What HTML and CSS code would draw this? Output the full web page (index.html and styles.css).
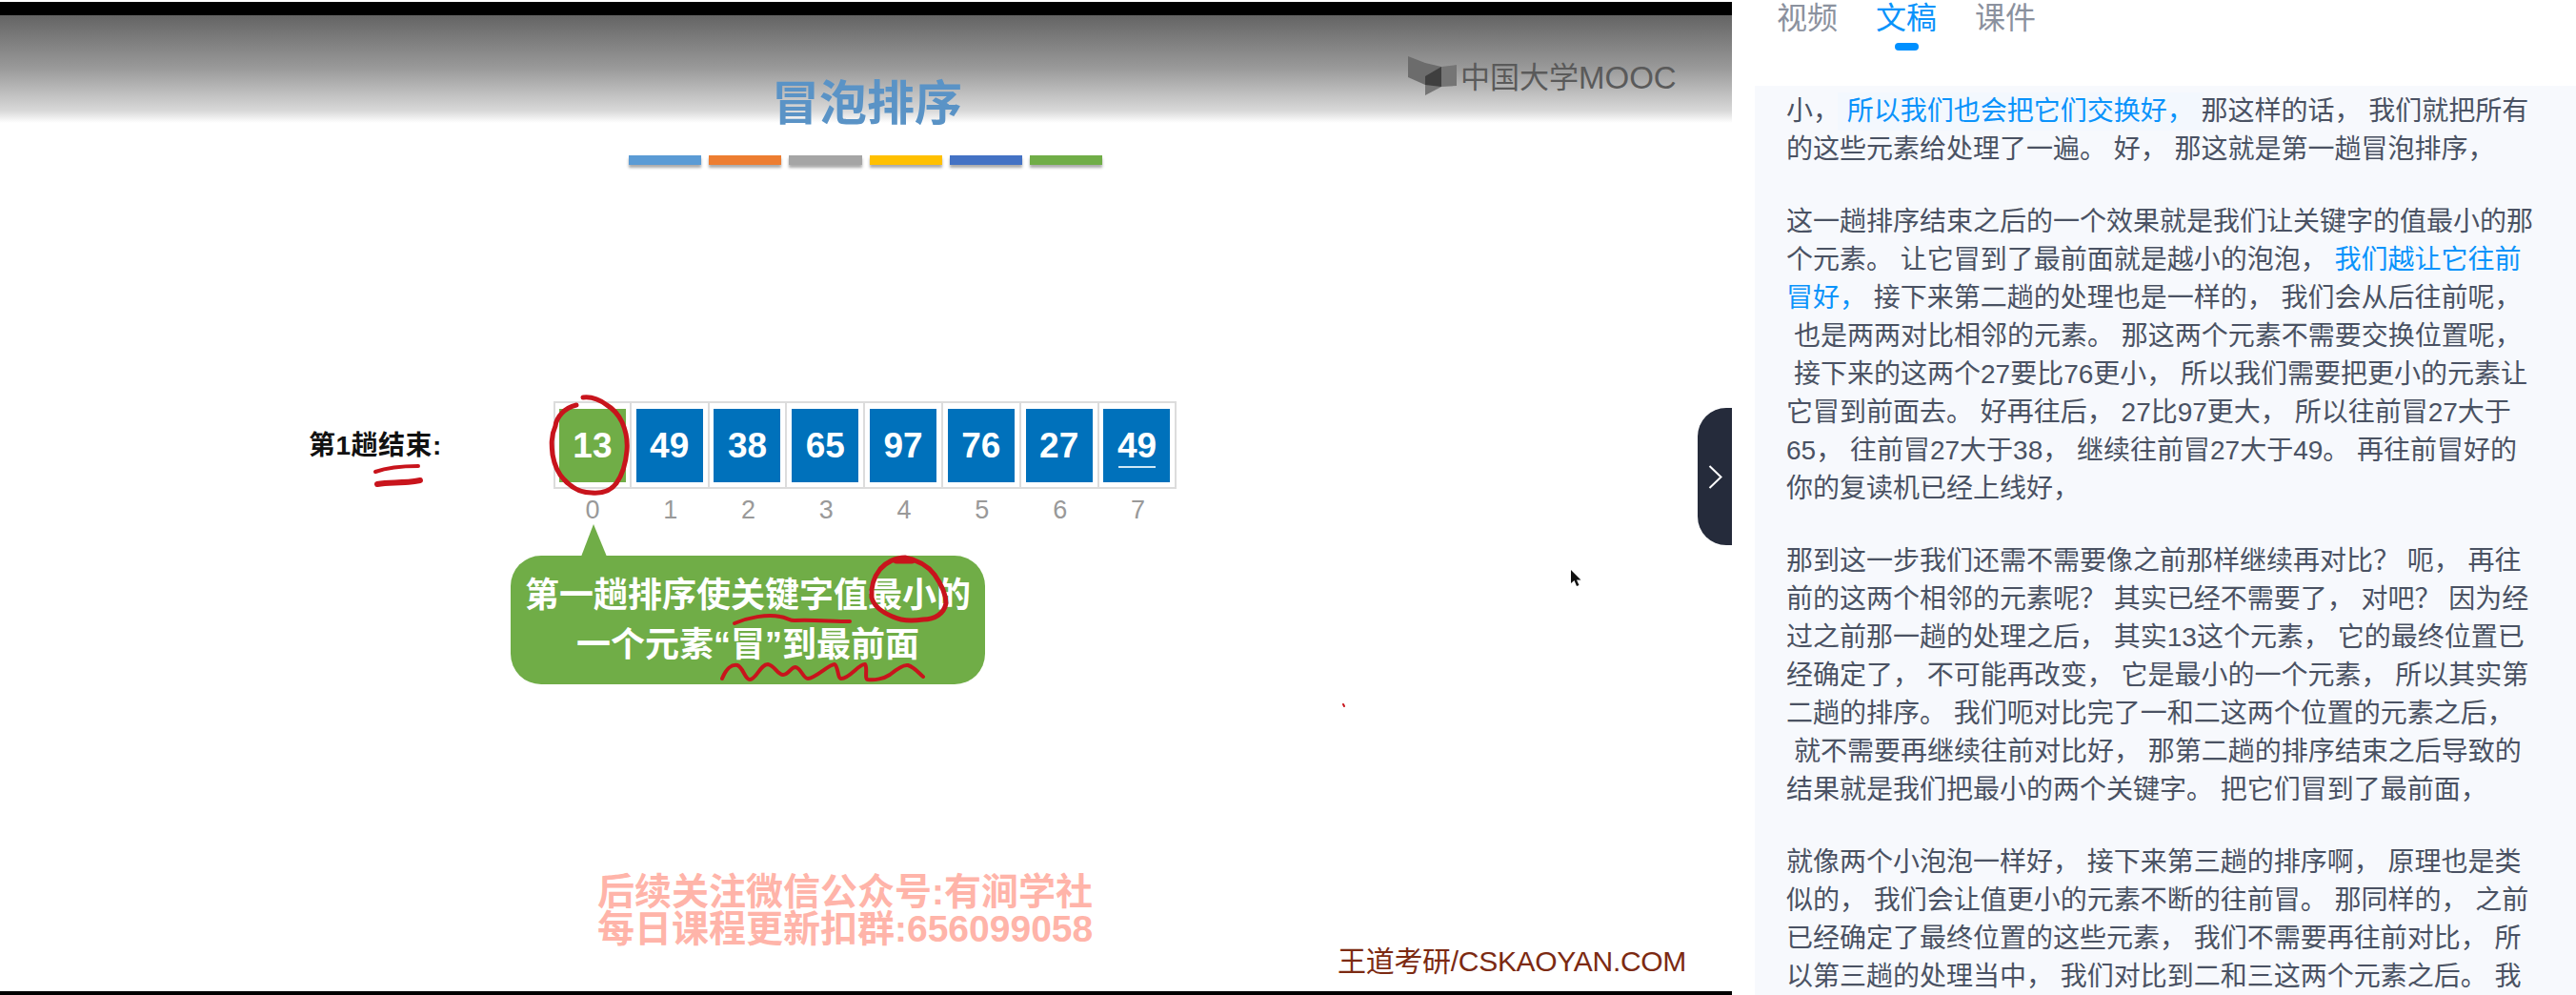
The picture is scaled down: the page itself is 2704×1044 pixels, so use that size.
FILE: index.html
```html
<!DOCTYPE html>
<html lang="zh-CN">
<head>
    <meta charset="UTF-8">
    <title>冒泡排序</title>
    <link rel="stylesheet" href="styles.css">
</head>
<body>
    <div id="page">
        <div id="video">
            <div class="band"></div>
            <div class="slide">
                <h1 class="title">冒泡排序</h1>
                <div class="bars">
                    <i class="c1"></i><i class="c2"></i><i class="c3"></i><i class="c4"></i><i class="c5"></i><i class="c6"></i>
                </div>

                <div class="logo">
                    <svg width="52" height="42" viewBox="0 0 52 42">
                        <polygon points="0,0 18,7 35,11 35,32 18,30 0,22" fill="#6c6c6c"/>
                        <polygon points="51,9 51,31 35,32 18,41 18,21 35,11" fill="#757575"/>
                        <polygon points="18,21 35,11 35,32 18,30" fill="#3f3f3f"/>
                    </svg>
                    <span class="cn">中国大学</span><span class="en">MOOC</span>
                </div>

                <div class="pass-label">第1趟结束:</div>
                <div class="cells">
                    <div class="cell"><b class="green">13</b><span>0</span></div>
                    <div class="cell"><b>49</b><span>1</span></div>
                    <div class="cell"><b>38</b><span>2</span></div>
                    <div class="cell"><b>65</b><span>3</span></div>
                    <div class="cell"><b>97</b><span>4</span></div>
                    <div class="cell"><b>76</b><span>5</span></div>
                    <div class="cell"><b>27</b><span>6</span></div>
                    <div class="cell"><b class="dup">49</b><span>7</span></div>
                </div>

                <div class="callout">第一趟排序使关键字值最小的<br>一个元素“冒”到最前面</div>

                <div class="notice">
                    <p>后续关注微信公众号:有涧学社</p>
                    <p>每日课程更新扣群:656099058</p>
                </div>
                <div class="site">王道考研/CSKAOYAN.COM</div>

                <!-- teacher's pen marks + mouse pointer -->
                <svg class="ink" width="1818" height="1044" viewBox="0 0 1818 1044">
                    <g fill="none" stroke="#c8141c" stroke-linecap="round" stroke-linejoin="round">
                        <path stroke-width="5" d="M605 425C592 428 584 438 583 447C578 458 579 468 580 477C582 488 586 497 592 503C600 512 610 517 621 517C633 518 642 514 647 507C654 497 657 485 658 473C659 462 657 452 653 443C649 435 644 429 637 425C629 419 620 416 612 417"/>
                        <path stroke-width="4" d="M394 495C408 490 425 489 439 489"/>
                        <path stroke-width="6" d="M396 508C410 505 420 508 441 504"/>
                        <path stroke-width="5" d="M924 597C930 590 940 585 950 585C965 588 975 595 981 603C988 613 993 623 993 633C991 644 981 650 969 650C955 652 945 651 937 647C925 642 917 635 915 627C914 616 916 607 924 597"/>
                        <path stroke-width="7" d="M941 588L957 588"/>
                        <path stroke-width="4" d="M771 654C785 648 805 644 819 647C826 648 830 652 835 651C850 650 875 652 892 652"/>
                        <path stroke-width="4" d="M758 712C762 702 768 697 774 698C780 700 782 713 787 713C794 713 798 697 806 697C813 698 816 708 822 708C828 708 830 700 835 700C841 701 843 712 848 712C856 712 870 697 876 697C880 699 879 712 883 712C892 712 902 696 908 697C911 700 907 713 911 713C918 714 928 712 934 708C940 703 948 697 953 698C960 700 964 706 969 710"/>
                        <path stroke-width="2" d="M1410 739L1411 741"/>
                    </g>
                    <path d="M1649 598V612L1652.500 609L1655 615L1657.500 614L1655 608.500H1659.500Z" fill="#111"/>
                </svg>
            </div>
            <div class="band"></div>
        </div>

        <button class="collapse">
            <svg width="15" height="25" viewBox="0 0 15 25"><path d="M1.500 1L13.500 12.500L1.500 24" fill="none" stroke="#fff" stroke-width="2"/></svg>
        </button>

        <div id="side">
            <div class="tabs">
                <a>视频</a>
                <a class="on">文稿</a>
                <a>课件</a>
            </div>
            <div class="doc">
                <p>
                    <span class="ln">小， <em class="hl">所以我们也会把它们交换好，</em> 那这样的话， 我们就把所有</span>
                    <span class="ln">的这些元素给处理了一遍。 好， 那这就是第一趟冒泡排序，</span>
                </p>
                <p>
                    <span class="ln">这一趟排序结束之后的一个效果就是我们让关键字的值最小的那</span>
                    <span class="ln">个元素。 让它冒到了最前面就是越小的泡泡， <em>我们越让它往前</em></span>
                    <span class="ln"><em>冒好，</em> 接下来第二趟的处理也是一样的， 我们会从后往前呢，</span>
                    <span class="ln in">也是两两对比相邻的元素。 那这两个元素不需要交换位置呢，</span>
                    <span class="ln in">接下来的这两个27要比76更小， 所以我们需要把更小的元素让</span>
                    <span class="ln">它冒到前面去。 好再往后， 27比97更大， 所以往前冒27大于</span>
                    <span class="ln">65， 往前冒27大于38， 继续往前冒27大于49。 再往前冒好的</span>
                    <span class="ln">你的复读机已经上线好，</span>
                </p>
                <p>
                    <span class="ln">那到这一步我们还需不需要像之前那样继续再对比？ 呃， 再往</span>
                    <span class="ln">前的这两个相邻的元素呢？ 其实已经不需要了， 对吧？ 因为经</span>
                    <span class="ln">过之前那一趟的处理之后， 其实13这个元素， 它的最终位置已</span>
                    <span class="ln">经确定了， 不可能再改变， 它是最小的一个元素， 所以其实第</span>
                    <span class="ln">二趟的排序。 我们呃对比完了一和二这两个位置的元素之后，</span>
                    <span class="ln in">就不需要再继续往前对比好， 那第二趟的排序结束之后导致的</span>
                    <span class="ln">结果就是我们把最小的两个关键字。 把它们冒到了最前面，</span>
                </p>
                <p>
                    <span class="ln">就像两个小泡泡一样好， 接下来第三趟的排序啊， 原理也是类</span>
                    <span class="ln">似的， 我们会让值更小的元素不断的往前冒。 那同样的， 之前</span>
                    <span class="ln">已经确定了最终位置的这些元素， 我们不需要再往前对比， 所</span>
                    <span class="ln">以第三趟的处理当中， 我们对比到二和三这两个元素之后。 我</span>
                </p>
            </div>
        </div>
    </div>
</body>
</html>
```

FILE: styles.css
```css
* {
    padding: 0px;
    margin: 0px;
    box-sizing: border-box;
}
body {
    background-color: #fff;
    font-family: "Liberation Sans", "Noto Sans CJK SC", sans-serif;
    overflow: hidden;
}
#page {
    width: 2704px;
    height: 1044px;
    display: flex;
    overflow: hidden;
}

/* left: the video frame */
#video {
    width: 1818px;
    height: 1044px;
    flex-shrink: 0;
    display: flex;
    flex-direction: column;
    padding-top: 2px;
}
.band {
    height: 14px;
    background-color: #000;
    flex-shrink: 0;
}
.band:last-child {
    height: 4px;
}
.slide {
    flex: 1;
    position: relative;
    background: linear-gradient(#646464 0px, #9a9a9a 56px, #d8d8d8 100px, #fff 113px);
    overflow: hidden;
}
/* positions below are measured from the slide top, which sits at y=16 */
.title {
    position: absolute;
    left: 810px;
    top: 60px;
    font-size: 50px;
    line-height: 66px;
    font-weight: bold;
    color: #5a93c6;
}
.bars {
    position: absolute;
    left: 660px;
    top: 147px;
    width: 497px;
    display: flex;
    gap: 8px;
}
.bars i {
    flex: 1;
    height: 10px;
    box-shadow: 0px 3px 3px #aaa;
}
.c1 { background-color: #5b9bd5; }
.c2 { background-color: #ed7d31; }
.c3 { background-color: #a5a5a5; }
.c4 { background-color: #ffc000; }
.c5 { background-color: #4472c4; }
.c6 { background-color: #70ad47; }

.logo {
    position: absolute;
    left: 1478px;
    top: 43px;
    display: flex;
    align-items: flex-start;
    color: #5a5a5a;
    white-space: nowrap;
}
.logo .cn {
    margin-left: 3px;
    margin-top: 3px;
    font-size: 31px;
    line-height: 40px;
}
.logo .en {
    margin-top: 3px;
    font-size: 33px;
    line-height: 40px;
}

.pass-label {
    position: absolute;
    left: 324px;
    top: 432px;
    font-size: 28px;
    line-height: 40px;
    letter-spacing: 0.500px;
    font-weight: bold;
    color: #111;
}
.cells {
    position: absolute;
    left: 581px;
    top: 405px;
    display: flex;
}
.cell {
    width: 81.800px;
    display: flex;
    flex-direction: column;
    align-items: center;
}
.cell b {
    width: 100%;
    height: 92px;
    border: 2px solid #dcdcdc;
    border-left-width: 0px;
    background-color: #fff;
    background-image: linear-gradient(#0071bb, #0071bb);
    background-repeat: no-repeat;
    background-size: 70px 77px;
    background-position: center;
    color: #fff;
    font-size: 37px;
    line-height: 90px;
    text-align: center;
    position: relative;
}
.cell:first-child b {
    border-left-width: 2px;
}
.cell b.green {
    background-image: linear-gradient(#70ad47, #70ad47);
}
.cell b.dup::after {
    content: "";
    position: absolute;
    left: 20px;
    right: 20px;
    top: 66px;
    height: 2px;
    background-color: #cfe8f6;
}
.cell span {
    font-size: 27px;
    line-height: 32px;
    margin-top: 6px;
    color: #999;
}

.callout {
    position: absolute;
    left: 536px;
    top: 567px;
    width: 498px;
    height: 135px;
    padding-top: 16px;
    border-radius: 32px;
    background-color: #70ad47;
    color: #fff;
    font-size: 36px;
    line-height: 52px;
    font-weight: bold;
    text-align: center;
}
.callout::before {
    content: "";
    position: absolute;
    left: 74px;
    top: -33px;
    border-left: 13px solid transparent;
    border-right: 14px solid transparent;
    border-bottom: 34px solid #70ad47;
}

.notice {
    position: absolute;
    left: 627px;
    top: 900px;
    color: #ffb4a9;
    font-size: 39px;
    line-height: 39px;
    font-weight: bold;
    white-space: nowrap;
}
.site {
    position: absolute;
    left: 1404px;
    top: 973px;
    font-size: 30px;
    line-height: 40px;
    letter-spacing: -0.300px;
    color: #7c2a12;
    white-space: nowrap;
}
.ink {
    position: absolute;
    left: 0px;
    top: -16px;
    pointer-events: none;
}

/* handle over the video edge */
.collapse {
    position: absolute;
    left: 1782px;
    top: 428px;
    width: 36px;
    height: 144px;
    border: none;
    border-radius: 30px 0px 0px 30px;
    background-color: #252b3b;
    display: flex;
    align-items: center;
    justify-content: center;
}

/* right: transcript */
#side {
    flex: 1;
    padding-left: 24px;
    display: flex;
    flex-direction: column;
    min-width: 0;
}
.tabs {
    height: 90px;
    padding-left: 23px;
    display: flex;
    gap: 40px;
}
.tabs a {
    height: 53px;
    padding-top: 1px;
    font-size: 32px;
    line-height: 36px;
    color: #8b919e;
    position: relative;
}
.tabs a.on {
    color: #0a93fb;
}
.tabs a.on::after {
    content: "";
    position: absolute;
    left: 20px;
    bottom: 0px;
    width: 25px;
    height: 8px;
    border-radius: 4px;
    background-color: #0090ff;
}
.doc {
    flex: 1;
    padding: 7px 0px 0px 33px;
    background-color: #f7f9fd;
    color: #4a5263;
    font-size: 28px;
    line-height: 40px;
    overflow: hidden;
}
.doc p {
    margin-bottom: 36px;
}
.ln {
    display: block;
    white-space: nowrap;
}
.ln.in {
    padding-left: 8px;
}
.doc em {
    font-style: normal;
    color: #0a93fb;
}
.doc em.hl {
    display: inline-block;
    margin: 0px -10px;
    padding: 0px 10px;
    background-color: #f3f8fe;
}
```
